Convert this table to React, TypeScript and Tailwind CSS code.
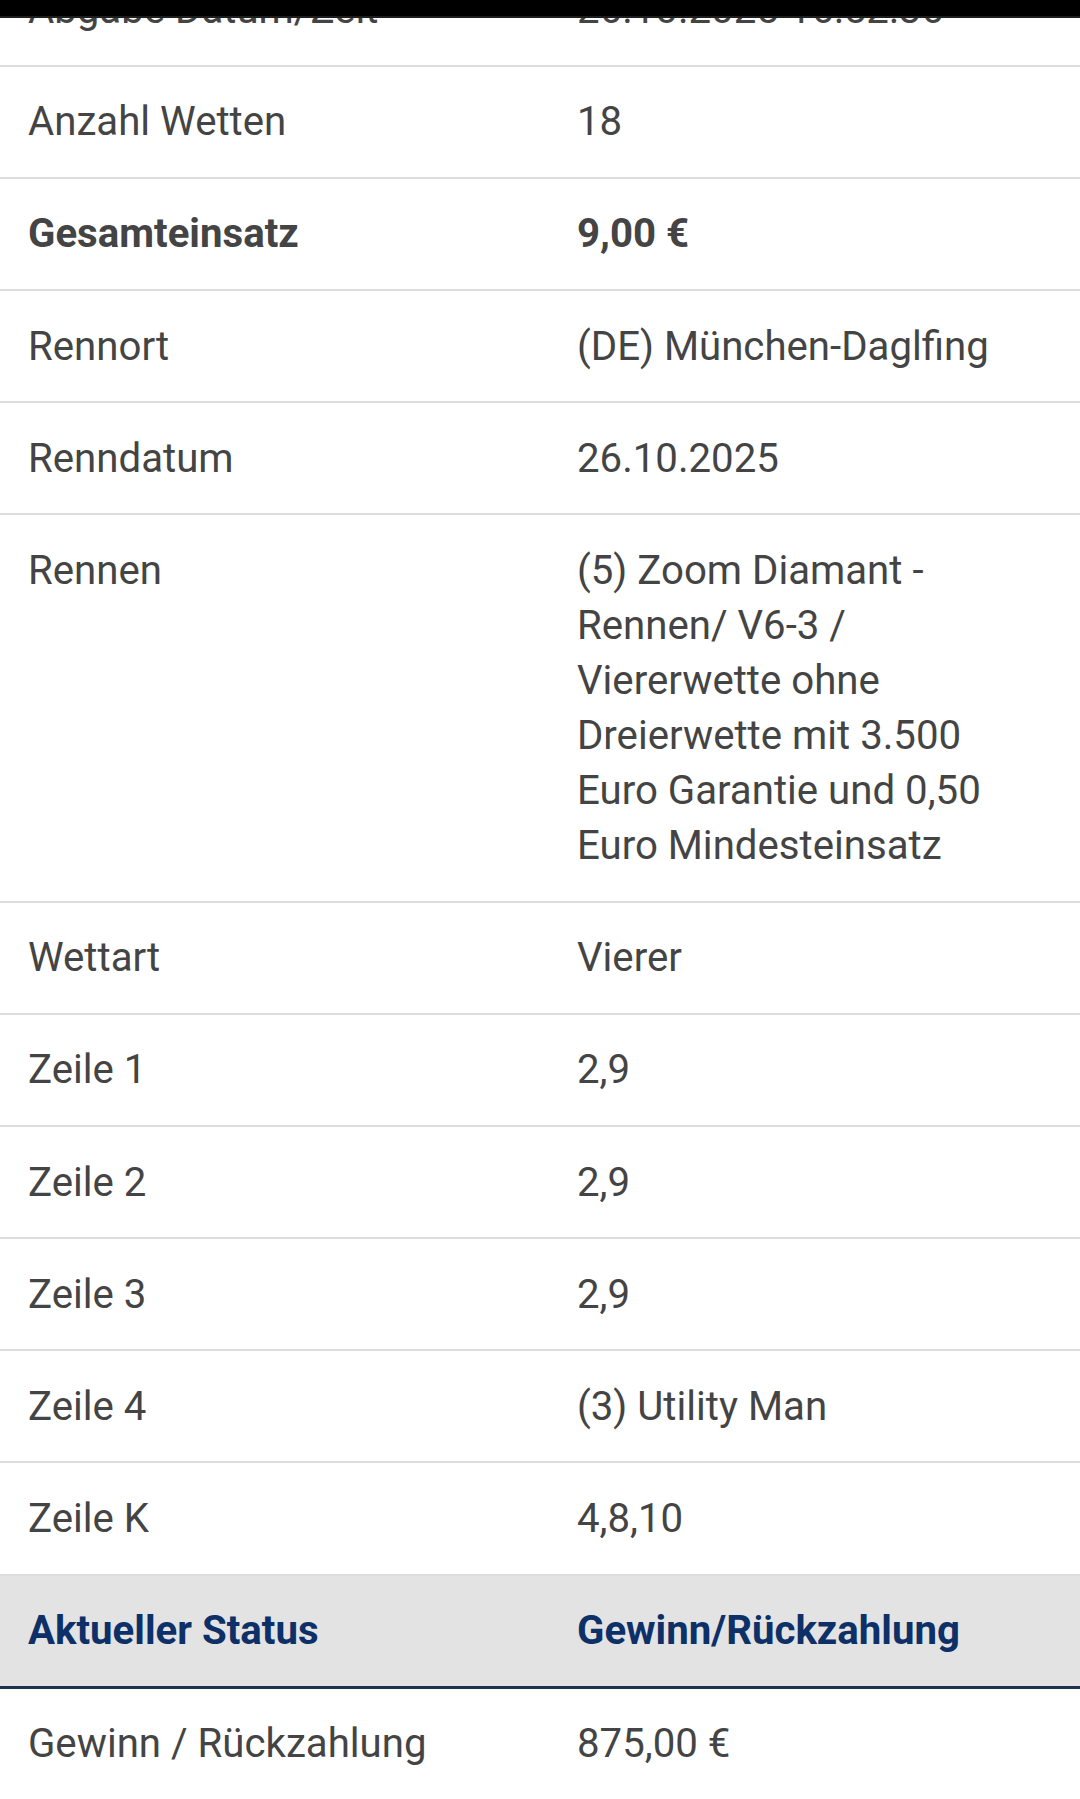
import React from "react";

type Row = { label: string; value: string; bold?: boolean };

const rows: Row[] = [
  { label: "Abgabe Datum/Zeit", value: "26.10.2025 16:52:36" },
  { label: "Anzahl Wetten", value: "18" },
  { label: "Gesamteinsatz", value: "9,00 €", bold: true },
  { label: "Rennort", value: "(DE) München-Daglfing" },
  { label: "Renndatum", value: "26.10.2025" },
  {
    label: "Rennen",
    value:
      "(5) Zoom Diamant - Rennen/ V6-3 / Viererwette ohne Dreierwette mit 3.500 Euro Garantie und 0,50 Euro Mindesteinsatz",
  },
  { label: "Wettart", value: "Vierer" },
  { label: "Zeile 1", value: "2,9" },
  { label: "Zeile 2", value: "2,9" },
  { label: "Zeile 3", value: "2,9" },
  { label: "Zeile 4", value: "(3) Utility Man" },
  { label: "Zeile K", value: "4,8,10" },
];

export default function App() {
  return (
    <div
      className="relative h-[1799px] w-[1080px] overflow-hidden bg-white text-[40.2px] leading-[55px] text-[#444444]"
      style={{ fontFamily: "Roboto, 'Liberation Sans', sans-serif" }}
    >
      <div className="-mt-[45.6px]">
        {rows.map((r) => (
          <div
            key={r.label}
            className={`grid grid-cols-[549px_1fr] border-b-2 border-[#dddddd] ${r.bold ? "font-bold" : "font-normal"}`}
          >
            <div className="pl-[28px] pr-[20px] py-[27.6px]">{r.label}</div>
            <div className="pl-[28px] pr-[60px] py-[27.6px]">{r.value}</div>
          </div>
        ))}
        <div className="grid grid-cols-[549px_1fr] border-b-[3px] border-[#1d3250] bg-[#e3e3e3] font-bold text-[#0c3067]">
          <div className="pl-[28px] pr-[20px] py-[27.6px]">Aktueller Status</div>
          <div className="pl-[28px] pr-[60px] py-[27.6px]">Gewinn/Rückzahlung</div>
        </div>
        <div className="grid grid-cols-[549px_1fr] border-b-2 border-[#dddddd]">
          <div className="pl-[28px] pr-[20px] py-[27.6px]">Gewinn / Rückzahlung</div>
          <div className="pl-[28px] pr-[60px] py-[27.6px]">875,00 €</div>
        </div>
      </div>
      <div className="absolute left-0 right-0 top-0 h-[18px] border-b-2 border-[#1e1e1e] bg-black" />
    </div>
  );
}
